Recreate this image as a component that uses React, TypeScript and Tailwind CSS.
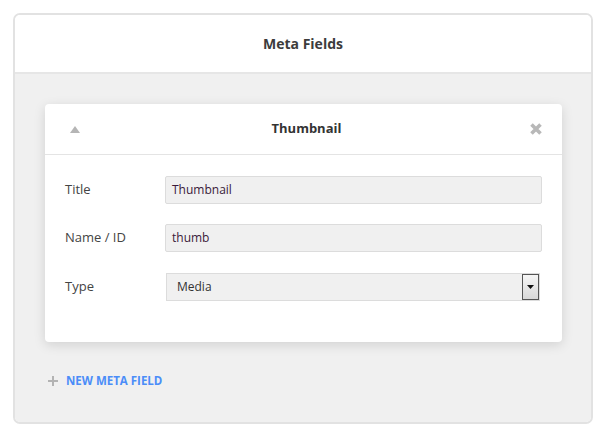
import React from 'react';

function Field({ label, value }: { label: string; value: string }) {
  return (
    <div className="flex items-center">
      <label className="w-[100px] text-[13px] text-[#444]">{label}</label>
      <div className="flex-1 h-[28px] flex items-center px-[6px] bg-[#f0f0f0] border border-[#dcdcdc] rounded-[2px] text-[12px] text-[#3a1a3a]">
        {value}
      </div>
    </div>
  );
}

export default function App() {
  return (
    <div className="w-[606px] h-[436px] bg-white p-[13px] pb-[12px]" style={{ fontFamily: '"Open Sans", "Noto Sans", sans-serif' }}>
      <div className="h-full border-2 border-[#e2e2e2] rounded-[7px] overflow-hidden flex flex-col">
        <div className="h-[59px] flex items-center justify-center border-b-2 border-[#e6e6e6] bg-white">
          <span className="text-[14px] font-bold text-[#3c3c3c]">Meta Fields</span>
        </div>
        <div className="flex-1 bg-[#f0f0f0] pt-[30px] pl-[30px] pr-[29px]">
          <div className="bg-white rounded-[4px] shadow-[0_3px_12px_rgba(0,0,0,0.13)]">
            <div className="h-[51px] flex items-center pl-[25px] pr-[19px] border-b border-[#e4e4e4]">
              <svg width="10" height="7" viewBox="0 0 10 7" className="w-[10px]">
                <path d="M5 0 L10 7 L0 7 Z" fill="#b5b5b5" />
              </svg>
              <span className="flex-1 text-center text-[13px] font-bold text-[#333] pl-[4px]">Thumbnail</span>
              <svg width="14" height="14" viewBox="0 0 14 14">
                <path d="M2.5 2.5 L11.5 11.5 M11.5 2.5 L2.5 11.5" stroke="#b8b8b8" strokeWidth="3.6" strokeLinecap="butt" />
              </svg>
            </div>
            <div className="px-[20px] pt-[21px] pb-[41px] flex flex-col gap-[20px]">
              <Field label="Title" value="Thumbnail" />
              <Field label="Name / ID" value="thumb" />
              <div className="flex items-center mt-[1px]">
                <label className="w-[101px] text-[13px] text-[#444]">Type</label>
                <div className="flex-1 mr-[2px] h-[28px] flex items-center pl-[10px] bg-[#f0f0f0] border border-[#dcdcdc] text-[12px] text-[#333]">
                  <span className="flex-1">Media</span>
                  <div className="w-[17px] h-[26px] border border-[#555] bg-gradient-to-b from-[#f6f6f6] to-[#d8d8d8] flex items-center justify-center">
                    <svg width="7" height="4" viewBox="0 0 7 4">
                      <path d="M0 0 L7 0 L3.5 4 Z" fill="#111" />
                    </svg>
                  </div>
                </div>
              </div>
            </div>
          </div>
          <div className="mt-[30px] ml-[3px] flex items-center gap-[8px]">
            <svg width="10" height="10" viewBox="0 0 10 10">
              <path d="M5 0 V10 M0 5 H10" stroke="#b3b3b3" strokeWidth="2" />
            </svg>
            <span className="text-[11.5px] font-bold text-[#4b8df8]">NEW META FIELD</span>
          </div>
        </div>
      </div>
    </div>
  );
}
